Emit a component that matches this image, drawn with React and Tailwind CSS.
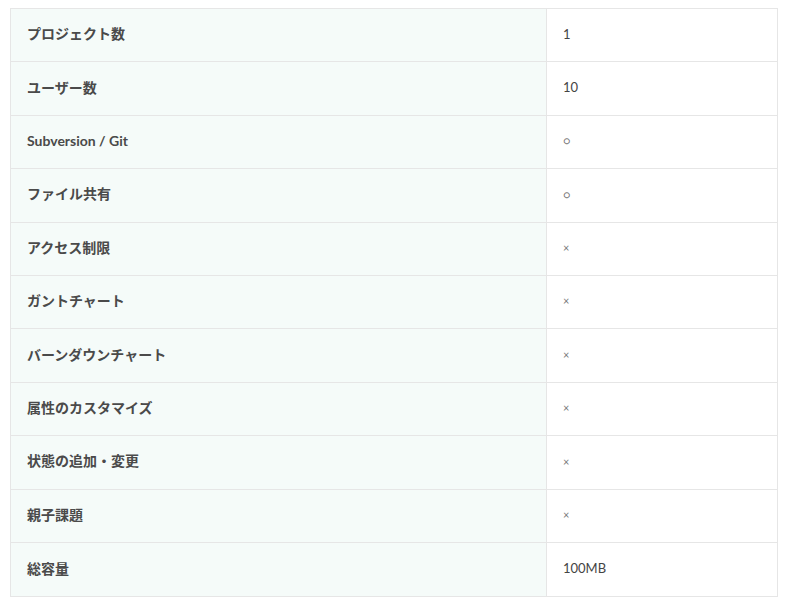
const rows = [
  ['プロジェクト数', '1'],
  ['ユーザー数', '10'],
  ['Subversion / Git', '○'],
  ['ファイル共有', '○'],
  ['アクセス制限', '×'],
  ['ガントチャート', '×'],
  ['バーンダウンチャート', '×'],
  ['属性のカスタマイズ', '×'],
  ['状態の追加・変更', '×'],
  ['親子課題', '×'],
  ['総容量', '100MB'],
];

const App = () => {
  return (
    <div
      className="min-h-[611px] bg-white pt-2 pl-[10px]"
      style={{ fontFamily: 'Lato, "Noto Sans CJK JP", sans-serif' }}
    >
      <div className="w-[768px] border border-[#e6e6e6]">
        {rows.map(([label, value], i) => (
          <div
            key={label}
            className={`flex h-[53.4px] ${i < rows.length - 1 ? 'border-b border-[#e6e6e6]' : ''}`}
          >
            <div className="flex w-[536px] items-center border-r border-[#e6e6e6] bg-[#f5fbf9] px-4 pb-[3px] text-[14px] font-bold text-[#4a4a4a]">
              {label}
            </div>
            <div
              className={`flex flex-1 items-center px-4 pb-px text-[#444] ${
                value === '○' || value === '×' ? 'text-[11px] text-[#777]' : 'text-[13px]'
              }`}
            >
              {value}
            </div>
          </div>
        ))}
      </div>
    </div>
  );
};

export default App;
